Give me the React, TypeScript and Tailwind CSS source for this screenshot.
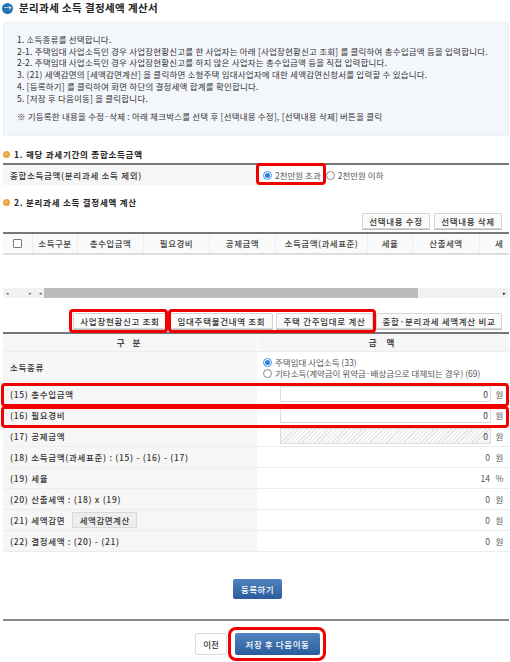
const font = { fontFamily: '"Noto Sans CJK KR", "Liberation Sans", sans-serif' };

function Bullet() {
  return (
    <span className="flex h-[7px] w-[7px] shrink-0 items-center justify-center rounded-full bg-[#e8a33a] text-[6px] leading-none text-white">
      ›
    </span>
  );
}

function Radio({ checked }: { checked?: boolean }) {
  return (
    <span className={`flex h-[9px] w-[9px] shrink-0 items-center justify-center rounded-full border bg-white ${checked ? "border-[#4a90e2]" : "border-[#888]"}`}>
      {checked && <span className="h-[5px] w-[5px] rounded-full bg-[#2f7de1]" />}
    </span>
  );
}

function GrayBtn({ children, w }: { children: string; w: string }) {
  return (
    <div className={`flex h-[16px] items-center justify-center whitespace-nowrap rounded-[1px] border border-[#d5d5d5] bg-[#fafafa] text-[8.5px] font-medium tracking-[0.7px] text-[#333] shadow-[0_1px_0_#bbb] ${w}`}>
      {children}
    </div>
  );
}

function Mark({ className }: { className: string }) {
  return <div className={`pointer-events-none absolute rounded-[4px] border-[3px] border-[#f00000] ${className}`} />;
}

const guide = [
  "1. 소득종류를 선택합니다.",
  "2-1. 주택임대 사업소득인 경우 사업장현황신고를 한 사업자는 아래 [사업장현황신고 조회] 를 클릭하여 총수입금액 등을 입력합니다.",
  "2-2. 주택임대 사업소득인 경우 사업장현황신고를 하지 않은 사업자는 총수입금액 등을 직접 입력합니다.",
  "3. (21) 세액감면의 [세액감면계산] 을 클릭하면 소형주택 임대사업자에 대한 세액감면신청서를 입력할 수 있습니다.",
  "4. [등록하기] 를 클릭하여 화면 하단의 결정세액 합계를 확인합니다.",
  "5. [저장 후 다음이동] 을 클릭합니다.",
];

const cols = [
  { label: "소득구분", w: "w-[45px]" },
  { label: "총수입금액", w: "w-[66px]" },
  { label: "필요경비", w: "w-[66px]" },
  { label: "공제금액", w: "w-[66px]" },
  { label: "소득금액(과세표준)", w: "w-[92px]" },
  { label: "세율", w: "w-[45px]" },
  { label: "산출세액", w: "w-[67px]" },
];

function Row({ label, children, h = "h-[21px]" }: { label: React.ReactNode; children: React.ReactNode; h?: string }) {
  return (
    <div className={`flex border-b border-[#ececec] ${h}`}>
      <div className="flex w-[254px] shrink-0 items-center whitespace-nowrap bg-[#f6f6f6] pl-[7px] text-[8.5px] font-medium tracking-[0.7px] text-[#333]">
        {label}
      </div>
      <div className="flex min-w-0 flex-1 items-center justify-end pr-[5px] text-[8.5px] text-[#555]">{children}</div>
    </div>
  );
}

function Amount({ value, unit = "원" }: { value: string; unit?: string }) {
  return (
    <>
      <span>{value}</span>
      <span className="ml-[5px] w-[9px] text-center">{unit}</span>
    </>
  );
}

function InputAmount({ hatch }: { hatch?: boolean }) {
  return (
    <>
      <div
        className={`flex h-[16px] w-[211px] items-center justify-end border border-[#ddd] pr-[2px] text-[8.5px] text-[#444] ${hatch ? "bg-[repeating-linear-gradient(135deg,#e4e4e4_0,#e4e4e4_1px,#fafafa_1px,#fafafa_3px)]" : "bg-white"}`}
      >
        0
      </div>
      <span className="ml-[4px] w-[9px] text-center">원</span>
    </>
  );
}

export default function App() {
  return (
    <div style={font} className="relative h-[662px] w-[510px] overflow-hidden bg-white pl-[3px] pr-[1px] text-[#333]">
      <div className="flex h-[22px] items-center gap-[6px] pb-[8px] pt-[2px]">
        <span className="ml-[-1px] flex h-[11px] w-[11px] items-center justify-center rounded-full bg-[#2274b5] text-[8px] leading-none text-white">→</span>
        <h1 className="text-[10.5px] font-bold tracking-[0.4px] text-[#222]">분리과세 소득 결정세액 계산서</h1>
      </div>

      <div className="h-[114px] border border-[#eef0f4] bg-[#f3f6fb] pl-[13px] pt-[11px] text-[8.5px] leading-[11.7px] tracking-[0.2px] text-[#333]">
        {guide.map((line) => (
          <p key={line} className="whitespace-nowrap">{line}</p>
        ))}
        <p className="mt-[7px] whitespace-nowrap">※ 기등록한 내용을 수정·삭제 : 아래 체크박스를 선택 후 [선택내용 수정], [선택내용 삭제] 버튼을 클릭</p>
      </div>

      <div className="mt-[11px] flex h-[14px] items-center gap-[4px]">
        <Bullet />
        <h2 className="text-[8.5px] font-bold tracking-[0.75px] text-[#222]">1. 해당 과세기간의 종합소득금액</h2>
      </div>
      <div className="mt-[2px] flex h-[22px] border-t-2 border-[#777]">
        <div className="flex w-[254px] items-center bg-[#f6f6f6] pl-[7px] text-[8.5px] font-medium tracking-[0.7px]">종합소득금액(분리과세 소득 제외)</div>
        <div className="flex items-center pl-[6px] text-[8.5px] text-[#555]">
          <Radio checked />
          <span className="ml-[3px]">2천만원 초과</span>
          <span className="ml-[5px]"><Radio /></span>
          <span className="ml-[3px]">2천만원 이하</span>
        </div>
      </div>

      <div className="mt-[10px] flex h-[14px] items-center gap-[4px]">
        <Bullet />
        <h2 className="text-[8.5px] font-bold tracking-[0.75px] text-[#222]">2. 분리과세 소득 결정세액 계산</h2>
      </div>
      <div className="mt-[4px] flex justify-end gap-[4px] pr-[7px]">
        <GrayBtn w="w-[68px]">선택내용 수정</GrayBtn>
        <GrayBtn w="w-[68px]">선택내용 삭제</GrayBtn>
      </div>

      <div className="mt-[3px] flex h-[23px] overflow-hidden border-b-2 border-t-2 border-b-[#ddd] border-t-[#777] bg-[#fafafa]">
        <div className="flex w-[30px] shrink-0 items-center justify-center border-r border-[#eee]">
          <span className="h-[9px] w-[9px] rounded-[1px] border border-[#777] bg-white" />
        </div>
        {cols.map((c) => (
          <div key={c.label} className={`flex shrink-0 items-center justify-center whitespace-nowrap border-r border-[#eee] text-[8.5px] font-medium tracking-[0.5px] text-[#444] ${c.w}`}>
            {c.label}
          </div>
        ))}
        <div className="flex shrink-0 items-center whitespace-nowrap pl-[15px] text-[8.5px] font-medium tracking-[0.5px] text-[#444]">세</div>
      </div>

      <div className="mt-[33px] flex h-[10px] items-center bg-[#f1f1f1] text-[5px] text-[#666]">
        <span className="w-[26px] pl-[3px]">◂</span>
        <span className="w-[10px]">▸</span>
        <span className="w-[5px]">◂</span>
        <div className="h-full w-[374px] bg-[#bcbcbc]" />
        <span className="ml-auto pr-[3px] text-black">▸</span>
      </div>

      <div className="mt-[15px] flex justify-end gap-[3px] pr-[7px]">
        <GrayBtn w="w-[94px]">사업장현황신고 조회</GrayBtn>
        <GrayBtn w="w-[103px]">임대주택물건내역 조회</GrayBtn>
        <GrayBtn w="w-[97px]">주택 간주임대로 계산</GrayBtn>
        <GrayBtn w="w-[126px]">종합·분리과세 세액계산 비교</GrayBtn>
      </div>

      <div className="mt-[3px] flex h-[20px] border-b border-t-2 border-b-[#ececec] border-t-[#777] bg-[#f6f6f6] text-[8.5px] font-bold text-[#444]">
        <div className="flex w-[254px] items-center justify-center tracking-[3px]">구 분</div>
        <div className="flex flex-1 items-center justify-center border-l border-white tracking-[4px]">금 액</div>
      </div>

      <Row label="소득종류" h="h-[32px]">
        <div className="mr-auto flex flex-col gap-[1px] pl-[6px]">
          <div className="flex items-center gap-[3px] leading-[10px]"><Radio checked />주택임대 사업소득 (33)</div>
          <div className="flex items-center gap-[3px] whitespace-nowrap leading-[10px]"><Radio />기타소득(계약금이 위약금·배상금으로 대체되는 경우) (69)</div>
        </div>
      </Row>
      <Row label="(15) 총수입금액"><InputAmount /></Row>
      <Row label="(16) 필요경비"><InputAmount /></Row>
      <Row label="(17) 공제금액"><InputAmount hatch /></Row>
      <Row label="(18) 소득금액(과세표준) : (15) - (16) - (17)"><Amount value="0" /></Row>
      <Row label="(19) 세율"><Amount value="14" unit="%" /></Row>
      <Row label="(20) 산출세액 : (18) x (19)"><Amount value="0" /></Row>
      <Row
        label={
          <>
            (21) 세액감면
            <span className="ml-[7px] flex h-[16px] w-[65px] items-center justify-center rounded-[1px] border border-[#d8d8d8] bg-[#eeeeee] text-[8.5px] tracking-[0.5px]">세액감면계산</span>
          </>
        }
      >
        <Amount value="0" />
      </Row>
      <Row label="(22) 결정세액 : (20) - (21)"><Amount value="0" /></Row>

      <div className="mt-[27px] flex justify-center pl-[3px]">
        <div className="flex h-[20px] w-[49px] items-center justify-center rounded-[2px] bg-gradient-to-b from-[#5183bd] to-[#2a5c9c] text-[8.5px] font-medium tracking-[0.4px] text-white">등록하기</div>
      </div>
      <div className="mt-[20px] h-[2px] bg-[#888]" />
      <div className="mt-[12px] flex justify-center gap-[8px] pl-[3px]">
        <div className="flex h-[22px] w-[32px] items-center justify-center rounded-[2px] border border-[#ddd] bg-white text-[8.5px] font-medium">이전</div>
        <div className="flex h-[22px] w-[85px] items-center justify-center whitespace-nowrap rounded-[2px] bg-gradient-to-b from-[#5183bd] to-[#2a5c9c] text-[8.5px] font-medium tracking-[0.6px] text-white">저장 후 다음이동</div>
      </div>

      <Mark className="left-[256px] top-[163px] h-[22px] w-[70px]" />
      <Mark className="left-[69px] top-[309px] h-[24px] w-[99px]" />
      <Mark className="left-[168px] top-[309px] h-[24px] w-[208px]" />
      <Mark className="left-[1px] top-[383px] h-[24px] w-[508px]" />
      <Mark className="left-[1px] top-[406px] h-[22px] w-[508px]" />
      <Mark className="left-[228px] top-[627px] h-[34px] w-[98px] rounded-[8px]" />
    </div>
  );
}
